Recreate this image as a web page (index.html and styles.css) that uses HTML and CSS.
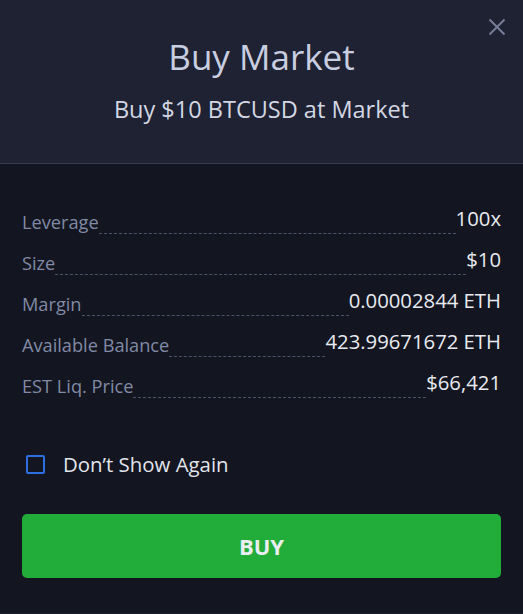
FILE: index.html
```html
<!DOCTYPE html>
<html lang="en">
<head>
    <meta charset="UTF-8">
    <meta name="viewport" content="width=device-width, initial-scale=1.0">
    <title>Buy Market</title>
    <link rel="stylesheet" href="styles.css">
</head>
<body>
    <div class="modal">
        <!-- header -->
        <div class="modal-header">
            <button class="close-btn" aria-label="Close">
                <svg width="18" height="18" viewBox="0 0 18 18">
                    <path d="M1.5 1.5 L16.5 16.5 M16.5 1.5 L1.5 16.5" stroke="#767d96" stroke-width="2" fill="none"/>
                </svg>
            </button>
            <h1 class="title">Buy Market</h1>
            <p class="subtitle">Buy $10 BTCUSD at Market</p>
        </div>

        <!-- order details -->
        <div class="modal-body">
            <div class="details">
                <div class="row">
                    <span class="label">Leverage</span>
                    <span class="dots"></span>
                    <span class="value">100x</span>
                </div>
                <div class="row">
                    <span class="label">Size</span>
                    <span class="dots"></span>
                    <span class="value">$10</span>
                </div>
                <div class="row">
                    <span class="label">Margin</span>
                    <span class="dots"></span>
                    <span class="value">0.00002844 ETH</span>
                </div>
                <div class="row">
                    <span class="label">Available Balance</span>
                    <span class="dots"></span>
                    <span class="value">423.99671672 ETH</span>
                </div>
                <div class="row">
                    <span class="label">EST Liq. Price</span>
                    <span class="dots"></span>
                    <span class="value">$66,421</span>
                </div>
            </div>

            <label class="check">
                <span class="box"></span>
                <span>Don’t Show Again</span>
            </label>

            <button class="buy-btn">BUY</button>
        </div>
    </div>
</body>
</html>
```

FILE: styles.css
```css
body {
    font-family: 'Open Sans', 'Noto Sans', sans-serif;
    background-color: #131520;
    margin: 0;
}

.modal {
    height: 614px;
    box-sizing: border-box;
    border-bottom: 1px solid #1b1e2c;
}

.modal-header {
    position: relative;
    height: 164px;
    box-sizing: border-box;
    background: #1e2232;
    border-bottom: 1px solid #363b50;
    text-align: center;
    padding-top: 34px;
}

.close-btn {
    position: absolute;
    top: 18px;
    right: 17px;
    padding: 0;
    border: none;
    background: none;
    cursor: pointer;
}

.close-btn svg {
    display: block;
}

.title {
    margin: 0;
    font-size: 35px;
    font-weight: 400;
    line-height: 46px;
    color: #c9cee0;
}

.subtitle {
    margin: 14px 0 0;
    font-size: 23.5px;
    line-height: 30px;
    color: #d3d7e3;
}

.modal-body {
    padding: 0 22px;
}

.details {
    padding-top: 29px;
}

.row {
    display: flex;
    align-items: flex-end;
    height: 41px;
}

.label {
    color: #818aa5;
    font-size: 18.2px;
    line-height: 24px;
}

.dots {
    flex: 1;
    border-bottom: 1px dashed #4b5169;
}

.value {
    color: #e8eaf0;
    font-size: 20.3px;
    line-height: 24px;
    margin-bottom: 4px;
}

.check {
    display: flex;
    align-items: center;
    gap: 18px;
    margin-top: 53px;
    padding-left: 4px;
    font-size: 20.4px;
    line-height: 27px;
    color: #e2e5ec;
    cursor: pointer;
}

.box {
    width: 15px;
    height: 15px;
    border: 2px solid #2d6fe0;
    border-radius: 2px;
}

.buy-btn {
    display: block;
    width: 100%;
    height: 64px;
    margin-top: 36px;
    border: none;
    border-radius: 5px;
    background: #22ad3a;
    color: #eaeef2;
    font-family: inherit;
    font-size: 22px;
    font-weight: 700;
    cursor: pointer;
}
```
